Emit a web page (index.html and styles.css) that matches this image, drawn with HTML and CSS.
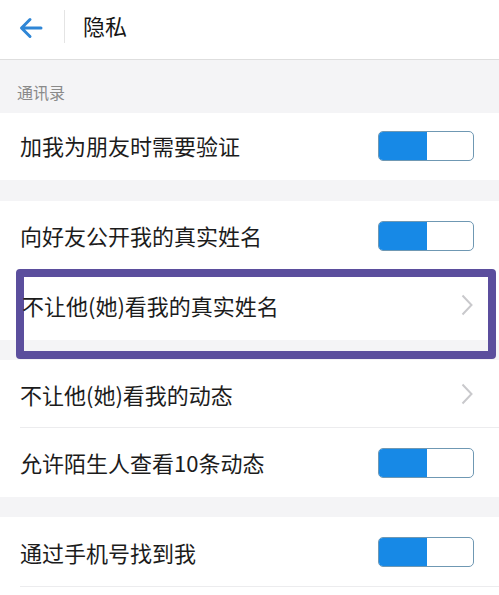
FILE: index.html
```html
<!DOCTYPE html>
<html lang="zh-CN">
<head>
<meta charset="utf-8">
<link rel="stylesheet" href="styles.css">
</head>
<body>
<header class="topbar">
  <div class="back">
    <svg width="24" height="22" viewBox="0 0 24 22"><path d="M22 11H3M11 2.5L2.5 11L11 19.5" fill="none" stroke="#2f86d6" stroke-width="3" stroke-linecap="round" stroke-linejoin="round"/></svg>
  </div>
  <div class="vdiv"></div>
  <div class="title">隐私</div>
</header>
<div class="label">通讯录</div>
<div class="row r1"><span class="txt">加我为朋友时需要验证</span><span class="toggle"><i></i></span></div>
<div class="gap g1"></div>
<div class="row r2"><span class="txt">向好友公开我的真实姓名</span><span class="toggle"><i></i></span></div>
<div class="hl-wrap">
  <div class="row r3"><span class="txt">不让他(她)看我的真实姓名</span><span class="chev"><svg width="12" height="22" viewBox="0 0 12 22"><path d="M1.5 1.5L10.5 11L1.5 20.5" fill="none" stroke="#c9c9cc" stroke-width="2"/></svg></span></div>
  <div class="gap g2"></div>
  <div class="hl"></div>
</div>
<div class="row r4 sep"><span class="txt">不让他(她)看我的动态</span><span class="chev"><svg width="12" height="22" viewBox="0 0 12 22"><path d="M1.5 1.5L10.5 11L1.5 20.5" fill="none" stroke="#c9c9cc" stroke-width="2"/></svg></span></div>
<div class="row r5"><span class="txt">允许陌生人查看10条动态</span><span class="toggle"><i></i></span></div>
<div class="gap g3"></div>
<div class="row r6 sep"><span class="txt">通过手机号找到我</span><span class="toggle"><i></i></span></div>
</body>
</html>
```
FILE: styles.css
```css
* { box-sizing: border-box; }
body {
  margin: 0;
  background: #ffffff;
  font-family: "Noto Sans CJK SC", "Noto Sans", sans-serif;
  color: #1c1c1c;
}
.topbar {
  height: 60px;
  display: flex;
  align-items: center;
  border-bottom: 1px solid #dedede;
  box-shadow: 0 1px 1px rgba(0,0,0,0.04);
}
.back {
  width: 64px;
  padding-left: 19px;
  display: flex;
  align-items: center;
  height: 100%;
}
.back svg { display: block; margin-top: -4px; }
.vdiv {
  width: 1px;
  height: 33px;
  background: #e4e4e4;
  margin-top: -7px;
}
.title {
  padding-left: 18px;
  font-size: 22px;
  line-height: 1;
  margin-top: -9px;
  color: #151515;
}
.label {
  height: 53px;
  background: #f4f4f6;
  display: flex;
  align-items: flex-end;
  padding: 0 0 10px 17px;
  font-size: 16px;
  line-height: 22px;
  color: #8a8a8a;
}
.row {
  display: flex;
  align-items: center;
  justify-content: space-between;
  padding: 0 25px 0 20px;
  background: #fff;
  position: relative;
}
.txt {
  font-size: 22px;
  line-height: 1.2;
  position: relative;
  z-index: 2;
}
.r1 { height: 67px; padding-bottom: 2px; }
.r2 { height: 67px; padding-top: 2px; }
.r3 { height: 72px; padding-left: 22px; padding-top: 2px; }
.r4 { height: 68px; }
.r5 { height: 69px; }
.r6 { height: 70px; }
.sep::after {
  content: "";
  position: absolute;
  left: 20px;
  right: 0;
  bottom: 0;
  height: 1px;
  background: #ececee;
}
.gap { background: #f4f4f6; }
.g1 { height: 21px; }
.g2 { height: 20px; }
.g3 { height: 20px; }
.toggle {
  width: 96px;
  height: 30px;
  border: 1.5px solid #6f98b3;
  border-radius: 5px;
  background: #fff;
  overflow: hidden;
  display: flex;
}
.toggle i {
  display: block;
  width: 48px;
  height: 100%;
  background: #1789e6;
}
.chev { display: flex; align-items: center; padding-right: 1px; }
.chev svg { display: block; }
.hl-wrap { position: relative; }
.hl {
  position: absolute;
  left: 16px;
  top: 1px;
  width: 480px;
  height: 90px;
  border: 8px solid #5b4e9d;
  border-radius: 4px;
  z-index: 1;
  pointer-events: none;
}
```
